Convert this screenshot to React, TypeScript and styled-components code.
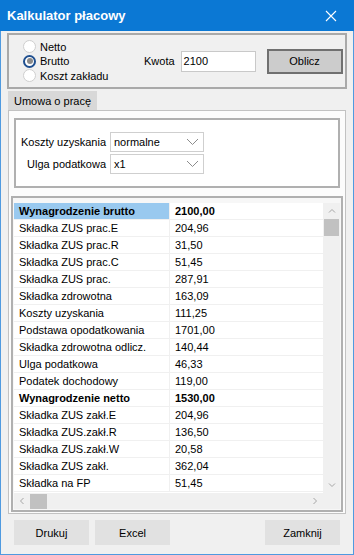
import React from 'react';
import styled, { createGlobalStyle } from 'styled-components';

const GlobalStyle = createGlobalStyle`
  html, body {
    margin: 0;
    padding: 0;
    background: #f0f0f0;
  }
  body {
    font-family: "Liberation Sans", Arial, sans-serif;
    font-size: 11px;
    color: #000;
  }
`;

const Window = styled.div`
  width: 354px;
  height: 555px;
  box-sizing: border-box;
  background: #f0f0f0;
  border: 1px solid #4f9ae0;
  border-top: none;
  display: flex;
  flex-direction: column;
`;

const TitleBar = styled.div`
  height: 31px;
  margin: 0 -1px;
  background: #0b78d4;
  color: #fff;
  display: flex;
  align-items: center;
  justify-content: space-between;
  padding: 0 17px 0 7px;
  font-size: 13px;
  font-weight: bold;
`;

const CloseIcon = styled.svg`
  width: 12px;
  height: 12px;
`;

const TopGroup = styled.div`
  margin: 2px 6px 0 6px;
  height: 56px;
  box-sizing: border-box;
  border: 2px solid #a9a9a9;
  display: flex;
  align-items: center;
`;

const RadioList = styled.div`
  width: 121px;
  padding-left: 14px;
  display: flex;
  flex-direction: column;
`;

const RadioRow = styled.label`
  display: flex;
  align-items: center;
  gap: 4px;
  height: 14.5px;
`;

const RadioDot = styled.span<{ $checked?: boolean }>`
  width: 13px;
  height: 13px;
  box-sizing: border-box;
  border-radius: 50%;
  background: #fff;
  border: ${(p) => (p.$checked ? '2px solid #1f4f8f' : '1px solid #cfcfcf')};
  display: flex;
  align-items: center;
  justify-content: center;
  &::after {
    content: '';
    display: ${(p) => (p.$checked ? 'block' : 'none')};
    width: 6px;
    height: 6px;
    border-radius: 50%;
    background: #8a8a8a;
  }
`;

const FieldLabel = styled.span`
  margin-right: 6px;
`;

const TextBox = styled.div`
  width: 75px;
  height: 21px;
  box-sizing: border-box;
  border: 1px solid #c9c9c9;
  background: #fff;
  padding-left: 2px;
  display: flex;
  align-items: center;
`;

const MainButton = styled.button`
  margin-left: 11px;
  width: 76px;
  height: 25px;
  border: 2px solid #707070;
  background: #cccccc;
  font: inherit;
  font-weight: normal;
  color: #000;
`;

const TabStrip = styled.div`
  margin: 2px 7px 0 7px;
  display: flex;
`;

const Tab = styled.div`
  height: 19px;
  padding: 0 6px;
  background: #d8d8d8;
  display: flex;
  align-items: center;
`;

const TabPanel = styled.div`
  margin: 0 7px;
  height: 404px;
  box-sizing: border-box;
  border: 1px solid #c2c2c2;
  background: #fcfcfc;
  display: flex;
  flex-direction: column;
`;

const ParamBox = styled.div`
  margin: 7px 5px 0 5px;
  height: 70px;
  box-sizing: border-box;
  border: 2px solid #b0b0b0;
  background: #fff;
  display: grid;
  grid-template-columns: 94px 94px;
  align-content: center;
  row-gap: 2px;
`;

const ParamLabel = styled.span`
  text-align: right;
  align-self: center;
  padding-right: 4px;
`;

const Select = styled.div`
  height: 20px;
  box-sizing: border-box;
  border: 1px solid #cfcfcf;
  background: #fff;
  display: flex;
  align-items: center;
  justify-content: space-between;
  padding: 0 4px 0 3px;
`;

const Chevron = styled.svg`
  width: 13px;
  height: 8px;
`;

const GridBox = styled.div`
  margin: 8px 2px 1px 2px;
  flex: 1;
  box-sizing: border-box;
  border: 2px solid #b0b0b0;
  padding: 5px 1px 1px 1px;
  background: #f7f7f7;
  display: grid;
  grid-template-columns: 1fr 17px;
  grid-template-rows: 1fr 16px;
`;

const Rows = styled.div`
  display: flex;
  flex-direction: column;
  overflow: hidden;
  background: #fff;
`;

const Row = styled.div`
  display: grid;
  grid-template-columns: 155px 1px 1fr;
  height: 17px;
  flex: none;
  box-sizing: border-box;
  border-bottom: 1px solid #f0f0f0;
`;

const Cell = styled.div<{ $bold?: boolean; $selected?: boolean }>`
  display: flex;
  align-items: center;
  padding-left: 5px;
  font-weight: ${(p) => (p.$bold ? 'bold' : 'normal')};
  background: ${(p) => (p.$selected ? '#99c9ef' : 'transparent')};
`;

const ColLine = styled.div`
  background: #f0f0f0;
`;

const VScroll = styled.div`
  background: #f0f0f0;
  display: flex;
  flex-direction: column;
  align-items: center;
`;

const HScroll = styled.div`
  background: #f0f0f0;
  display: flex;
  align-items: center;
`;

const Corner = styled.div`
  background: #f0f0f0;
`;

const ArrowBox = styled.div`
  width: 16px;
  height: 16px;
  display: flex;
  align-items: center;
  justify-content: center;
  flex: none;
`;

const VThumb = styled.div`
  width: 15px;
  height: 17px;
  background: #c1c1c1;
`;

const HThumb = styled.div`
  width: 17px;
  height: 15px;
  background: #c1c1c1;
`;

const Spacer = styled.div`
  flex: 1;
`;

const ButtonBar = styled.div`
  display: flex;
  gap: 6px;
  padding: 6px 13px 0 13px;
`;

const FooterButton = styled.button`
  width: 75px;
  height: 25px;
  border: none;
  background: #e1e1e1;
  font: inherit;
  font-weight: normal;
  color: #000;
`;

type Dir = 'up' | 'down' | 'left' | 'right';

function Arrow({ dir }: { dir: Dir }) {
  const rot = { up: 0, right: 90, down: 180, left: 270 }[dir];
  return (
    <svg width="8" height="8" viewBox="0 0 8 8">
      <path
        d="M1 5.5 L4 2.5 L7 5.5"
        fill="none"
        stroke="#a6a6a6"
        strokeWidth="1"
        transform={`rotate(${rot} 4 4)`}
      />
    </svg>
  );
}

const rows: { label: string; value: string; bold?: boolean }[] = [
  { label: 'Wynagrodzenie brutto', value: '2100,00', bold: true },
  { label: 'Składka ZUS prac.E', value: '204,96' },
  { label: 'Składka ZUS prac.R', value: '31,50' },
  { label: 'Składka ZUS prac.C', value: '51,45' },
  { label: 'Składka ZUS prac.', value: '287,91' },
  { label: 'Składka zdrowotna', value: '163,09' },
  { label: 'Koszty uzyskania', value: '111,25' },
  { label: 'Podstawa opodatkowania', value: '1701,00' },
  { label: 'Składka zdrowotna odlicz.', value: '140,44' },
  { label: 'Ulga podatkowa', value: '46,33' },
  { label: 'Podatek dochodowy', value: '119,00' },
  { label: 'Wynagrodzenie netto', value: '1530,00', bold: true },
  { label: 'Składka ZUS zakł.E', value: '204,96' },
  { label: 'Składka ZUS.zakł.R', value: '136,50' },
  { label: 'Składka ZUS.zakł.W', value: '20,58' },
  { label: 'Składka ZUS zakł.', value: '362,04' },
  { label: 'Składka na FP', value: '51,45' },
];

export default function App() {
  return (
    <>
      <GlobalStyle />
      <Window>
        <TitleBar>
          <span>Kalkulator płacowy</span>
          <CloseIcon viewBox="0 0 12 12">
            <path d="M1 1 L11 11 M11 1 L1 11" stroke="#fff" strokeWidth="1.1" />
          </CloseIcon>
        </TitleBar>

        <TopGroup>
          <RadioList>
            <RadioRow>
              <RadioDot />
              Netto
            </RadioRow>
            <RadioRow>
              <RadioDot $checked />
              Brutto
            </RadioRow>
            <RadioRow>
              <RadioDot />
              Koszt zakładu
            </RadioRow>
          </RadioList>
          <FieldLabel>Kwota</FieldLabel>
          <TextBox>2100</TextBox>
          <MainButton>Oblicz</MainButton>
        </TopGroup>

        <TabStrip>
          <Tab>Umowa o pracę</Tab>
        </TabStrip>
        <TabPanel>
          <ParamBox>
            <ParamLabel>Koszty uzyskania</ParamLabel>
            <Select>
              normalne
              <Chevron viewBox="0 0 13 8">
                <path d="M1 1 L6.5 6.5 L12 1" fill="none" stroke="#8c8c8c" />
              </Chevron>
            </Select>
            <ParamLabel>Ulga podatkowa</ParamLabel>
            <Select>
              x1
              <Chevron viewBox="0 0 13 8">
                <path d="M1 1 L6.5 6.5 L12 1" fill="none" stroke="#8c8c8c" />
              </Chevron>
            </Select>
          </ParamBox>

          <GridBox>
            <Rows>
              {rows.map((r, i) => (
                <Row key={r.label}>
                  <Cell $bold={r.bold} $selected={i === 0}>
                    {r.label}
                  </Cell>
                  <ColLine />
                  <Cell $bold={r.bold}>{r.value}</Cell>
                </Row>
              ))}
            </Rows>
            <VScroll>
              <ArrowBox>
                <Arrow dir="up" />
              </ArrowBox>
              <VThumb />
              <Spacer />
              <ArrowBox>
                <Arrow dir="down" />
              </ArrowBox>
            </VScroll>
            <HScroll>
              <ArrowBox>
                <Arrow dir="left" />
              </ArrowBox>
              <HThumb />
              <Spacer />
              <ArrowBox>
                <Arrow dir="right" />
              </ArrowBox>
            </HScroll>
            <Corner />
          </GridBox>
        </TabPanel>

        <ButtonBar>
          <FooterButton>Drukuj</FooterButton>
          <FooterButton>Excel</FooterButton>
          <Spacer />
          <FooterButton>Zamknij</FooterButton>
        </ButtonBar>
      </Window>
    </>
  );
}
